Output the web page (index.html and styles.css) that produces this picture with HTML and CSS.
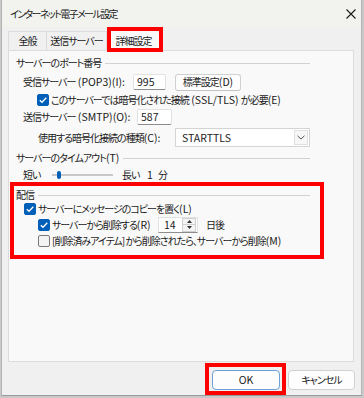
FILE: index.html
```html
<!DOCTYPE html>
<html lang="ja">
<head>
<meta charset="utf-8">
<link rel="stylesheet" href="styles.css">
</head>
<body>
<div class="window">
  <div class="titlebar">
    <span class="title j">インターネット電子メール設定</span>
    <svg class="close" width="10" height="10" viewBox="0 0 10 10"><path d="M0.5 0.5 L9.5 9.5 M9.5 0.5 L0.5 9.5" stroke="#1a1a1a" stroke-width="1.1"/></svg>
  </div>
  <div class="tabs">
    <div class="tab t1"><span class="j">全般</span></div>
    <div class="tab t2"><span class="j">送信サーバー</span></div>
    <div class="tab t3 active"><span class="j">詳細設定</span></div>
  </div>
  <div class="panel">
    <div class="group-title g1"><span class="j">サーバーのポート番号</span><i class="rule"></i></div>
    <div class="row r1">
      <span class="label l1"><span class="j">受信サーバー</span> (POP3)(I):</span>
      <div class="field f1">995</div>
      <div class="btn"><span class="j">標準設定</span>(D)</div>
    </div>
    <div class="row r2 cb-row">
      <span class="cb checked"><svg width="12" height="12" viewBox="0 0 12 12"><path d="M2.8 6.2 L5 8.3 L9.3 3.8" fill="none" stroke="#fff" stroke-width="1.3"/></svg></span>
      <span><span class="j">このサーバーでは暗号化された接続</span> (SSL/TLS) <span class="j">が必要</span>(E)</span>
    </div>
    <div class="row r3">
      <span class="label l3"><span class="j">送信サーバー</span> (SMTP)(O):</span>
      <div class="field f3">587</div>
    </div>
    <div class="row r4">
      <span class="label l4"><span class="j">使用する暗号化接続の種類</span>(C):</span>
      <div class="select"><span>STARTTLS</span><span class="chev"><svg width="8" height="5" viewBox="0 0 8 5"><path d="M0.5 0.8 L4 4 L7.5 0.8" fill="none" stroke="#555" stroke-width="1"/></svg></span></div>
    </div>
    <div class="group-title g2"><span><span class="j">サーバーのタイムアウト</span>(T)</span><i class="rule"></i></div>
    <div class="row r5">
      <span class="short j">短い</span>
      <div class="track"><i class="thumb"></i></div>
      <span class="long j">長い</span><span class="one">1</span><span class="min j">分</span>
    </div>
    <div class="group-title g3"><span class="j">配信</span><i class="rule"></i></div>
    <div class="row r6 cb-row">
      <span class="cb checked"><svg width="12" height="12" viewBox="0 0 12 12"><path d="M2.8 6.2 L5 8.3 L9.3 3.8" fill="none" stroke="#fff" stroke-width="1.3"/></svg></span>
      <span><span class="j">サーバーにメッセージのコピーを置く</span>(L)</span>
    </div>
    <div class="row r7 cb-row">
      <span class="cb checked"><svg width="12" height="12" viewBox="0 0 12 12"><path d="M2.8 6.2 L5 8.3 L9.3 3.8" fill="none" stroke="#fff" stroke-width="1.3"/></svg></span>
      <span class="l7"><span class="j">サーバーから削除する</span>(R)</span>
      <div class="spin"><span class="spin-val">14</span><span class="spin-btns"><i class="up"><svg width="5" height="3" viewBox="0 0 5 3"><path d="M0 3 L2.5 0 L5 3Z" fill="#333"/></svg></i><i class="down"><svg width="5" height="3" viewBox="0 0 5 3"><path d="M0 0 L2.5 3 L5 0Z" fill="#333"/></svg></i></span></div>
      <span class="days j">日後</span>
    </div>
    <div class="row r8 cb-row">
      <span class="cb"></span>
      <span><span class="j">[削除済みアイテム] から削除されたら、サーバーから削除</span>(M)</span>
    </div>
  </div>
  <div class="footer">
    <div class="pbtn ok">OK</div>
    <div class="pbtn cancel"><span class="j">キャンセル</span></div>
  </div>
  <div class="mark mark-tab"></div>
  <div class="mark mark-group"></div>
  <div class="mark mark-ok"></div>
</div>
</body>
</html>
```
FILE: styles.css
```css
* { box-sizing: border-box; }
html, body { margin: 0; padding: 0; }
body {
  width: 364px;
  height: 398px;
  background: #c9c9c9;
  font-family: "Noto Sans CJK JP", "Noto Sans", sans-serif;
  font-size: 10.5px;
  font-feature-settings: "palt";
  color: #1a1a1a;
  overflow: hidden;
}
.j {
  font-size: 10px;
  letter-spacing: -1px;
}
.window {
  position: relative;
  width: 361px;
  height: 396px;
  margin-left: 1px;
  background: #f0f0f0;
  border-left: 1px solid #b4b4b4;
  border-right: 1px solid #b4b4b4;
  border-bottom: 1px solid #9a9a9a;
  display: flex;
  flex-direction: column;
}
.titlebar {
  height: 27px;
  background: #f2f3ef;
  display: flex;
  align-items: center;
  padding-left: 8px;
  padding-right: 5px;
  justify-content: space-between;
  flex: none;
}
.title { line-height: 14px; padding-top: 1px; letter-spacing: -1.6px; }
.close { display: block; margin-top: 1px; }

.tabs {
  height: 23px;
  display: flex;
  align-items: flex-end;
  padding-left: 6px;
  flex: none;
  position: relative;
  z-index: 1;
}
.tab {
  height: 19px;
  border: 1px solid #dcdcdc;
  border-bottom: none;
  background: #f0f0f0;
  display: flex;
  align-items: center;
  justify-content: center;
  line-height: 14px;
  white-space: nowrap;
}
.t1 { width: 39px; }
.t2 { width: 60px; border-left: none; }
.t3 { width: 54px; border-left: none; }
.tab.active {
  height: 22px;
  background: #f9f9f9;
  margin-bottom: -1px;
  border-color: #d8d8d8;
}

.panel {
  margin-left: 6px;
  width: 346px;
  height: 312px;
  background: #f9f9f9;
  border: 1px solid #dcdcdc;
  padding: 4px 0 0 7px;
  flex: none;
}
.group-title {
  width: 294px;
  height: 16px;
  display: flex;
  align-items: center;
  line-height: 14px;
  white-space: nowrap;
}
.rule {
  flex: 1;
  height: 1px;
  background: #d2d2d2;
  margin-left: 4px;
  margin-top: 1px;
}
.row {
  display: flex;
  align-items: center;
  line-height: 14px;
  white-space: nowrap;
}
.r1 { height: 18px; margin-top: 2px; padding-left: 7px; }
.l1 { width: 110px; }
.field {
  height: 16px;
  background: #fff;
  border: 1px solid #e2e2e2;
  border-bottom: 1px solid #8c8c8c;
  border-radius: 2px;
  padding-left: 3px;
  display: flex;
  align-items: center;
}
.f1 { width: 33px; }
.btn {
  margin-left: 9px;
  width: 66px;
  height: 17px;
  background: #fdfdfd;
  border: 1px solid #d0d0d0;
  border-bottom-color: #c2c2c2;
  border-radius: 3px;
  display: flex;
  align-items: center;
  justify-content: center;
}
.r2 { height: 17px; padding-left: 21px; }
.cb {
  width: 12px;
  height: 12px;
  border-radius: 2px;
  border: 1px solid #7a7a7a;
  background: #f3f3f3;
  margin-right: 2px;
  flex: none;
  display: flex;
}
.cb svg { display: block; margin: -1px; }
.cb.checked { background: #005fb8; border-color: #005fb8; }
.r3 { height: 18px; padding-left: 7px; }
.l3 { width: 114px; }
.f3 { width: 35px; }
.r4 { height: 19px; margin-top: 2px; padding-left: 22px; }
.l4 { width: 137px; }
.select {
  width: 135px;
  height: 19px;
  background: #fff;
  border: 1px solid #d4d4d4;
  display: flex;
  align-items: center;
  justify-content: space-between;
  padding-left: 6px;
  padding-right: 1px;
}
.chev {
  width: 14px;
  height: 15px;
  border: 1px solid #e0e0e0;
  background: #f7f7f7;
  display: flex;
  align-items: center;
  justify-content: center;
}
.chev svg { display: block; }
.g2 { margin-top: 3px; }
.r5 { height: 17px; padding-left: 7px; }
.short { width: 29px; }
.track {
  width: 61px;
  height: 2px;
  background: #c8c8c8;
  position: relative;
  margin-right: 9px;
}
.thumb {
  position: absolute;
  left: 5px;
  top: -3px;
  width: 4px;
  height: 8px;
  border-radius: 2px;
  background: #005fb8;
}
.long { width: 25px; }
.one { width: 11px; }
.g3 { margin-top: 5px; height: 14px; }
.r6 { height: 14px; padding-left: 8px; }
.r7 { height: 17px; padding-left: 22px; }
.l7 { width: 106px; }
.spin {
  width: 40px;
  height: 16px;
  background: #fff;
  border: 1px solid #e2e2e2;
  border-bottom-color: #8c8c8c;
  display: flex;
  align-items: center;
  justify-content: space-between;
  padding-left: 5px;
  padding-right: 1px;
}
.spin-btns {
  width: 14px;
  height: 14px;
  display: flex;
  flex-direction: column;
  border: 1px solid #d0d0d0;
  background: #f4f4f4;
}
.spin-btns i {
  flex: 1;
  display: flex;
  align-items: center;
  justify-content: center;
}
.spin-btns i.up { border-bottom: 1px solid #d0d0d0; }
.spin-btns svg { display: block; }
.days { margin-left: 8px; }
.r8 { height: 16px; padding-left: 22px; }

.footer {
  flex: 1;
  display: flex;
  justify-content: flex-end;
  align-items: flex-start;
  padding-top: 8px;
  padding-right: 6px;
  gap: 8px;
}
.pbtn {
  height: 20px;
  background: #fdfdfd;
  border: 1px solid #d0d0d0;
  border-radius: 4px;
  display: flex;
  align-items: center;
  justify-content: center;
  line-height: 14px;
}
.ok { width: 68px; border-color: #6f9fd6; }
.cancel { width: 67px; }

.mark {
  position: absolute;
  border: 4px solid #ff0000;
  z-index: 5;
}
.mark-tab { left: 105px; top: 27px; width: 56px; height: 25px; }
.mark-group { left: 8px; top: 182px; width: 314px; height: 77px; }
.mark-ok { left: 203px; top: 363px; width: 81px; height: 32px; }
```
